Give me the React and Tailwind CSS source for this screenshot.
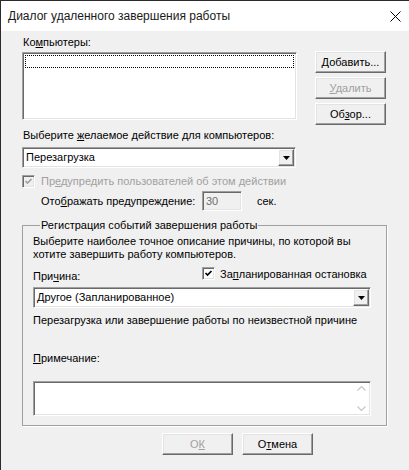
import React from 'react';

const sunken =
  'border border-t-[#a0a0a0] border-l-[#a0a0a0] border-r-white border-b-white shadow-[inset_1px_1px_0_#696969,inset_-1px_-1px_0_#e3e3e3]';
const raised =
  'border border-t-white border-l-white border-r-[#696969] border-b-[#696969] shadow-[inset_-1px_-1px_0_#a0a0a0,inset_1px_1px_0_#e3e3e3]';

function Key({ children }) {
  return <span className="underline underline-offset-[1px]">{children}</span>;
}

function Button({ children, disabled, className = '' }) {
  return (
    <div
      className={`flex h-[22px] w-[71px] items-center justify-center bg-[#f0f0f0] ${raised} ${
        disabled ? 'text-[#a0a0a0]' : 'text-black'
      } ${className}`}
    >
      {children}
    </div>
  );
}

function Arrow() {
  return (
    <svg width="7" height="4" viewBox="0 0 7 4">
      <path d="M0 0h7L3.5 4z" fill="#000" />
    </svg>
  );
}

function Combo({ value, className = '' }) {
  return (
    <div className={`flex h-[21px] items-stretch bg-white ${sunken} ${className}`}>
      <div className="flex flex-1 items-center pl-[3px]">{value}</div>
      <div className={`m-[1px] flex w-[16px] items-center justify-center bg-[#f0f0f0] ${raised}`}>
        <Arrow />
      </div>
    </div>
  );
}

function Check({ disabled }) {
  return (
    <div
      className={`flex h-[13px] w-[13px] items-center justify-center ${sunken} ${
        disabled ? 'bg-[#f0f0f0]' : 'bg-white'
      }`}
    >
      <svg width="9" height="9" viewBox="0 0 9 9">
        <path
          d="M1.5 4 L3.5 6 L7.5 2"
          fill="none"
          stroke={disabled ? '#a0a0a0' : '#000'}
          strokeWidth="1.7"
        />
      </svg>
    </div>
  );
}

export default function App() {
  return (
    <div className="flex h-[470px] w-[409px] flex-col overflow-hidden border-l border-t border-[#2b2b2b] bg-[#f0f0f0] font-['Liberation_Sans',Arial,sans-serif] text-[11px] leading-[13px] text-black">
      {/* title bar */}
      <div className="flex h-[30px] shrink-0 items-center justify-between bg-white pl-[7px] pr-[8px] text-[12px] text-[#1a1a1a]">
        <span>Диалог удаленного завершения работы</span>
        <svg width="11" height="11" viewBox="0 0 11 11">
          <path d="M0.5 0.5L10.5 10.5M10.5 0.5L0.5 10.5" stroke="#000" strokeWidth="1" />
        </svg>
      </div>

      <div className="flex flex-col pl-[21px] pr-[22px]">
        {/* computers */}
        <div className="flex">
          <div className="flex w-[275px] flex-col">
            <div className="mt-[5px] pl-[1px]">
              Ко<Key>м</Key>пьютеры:
            </div>
            <div className={`mt-[3px] h-[68px] bg-white p-[2px] ${sunken}`}>
              <div className="h-[13px] border border-dotted border-black" />
            </div>
          </div>
          <div className="ml-[18px] flex flex-col gap-[4px] pt-[20px]">
            <Button>
              <span>
                <Key>Д</Key>обавить...
              </span>
            </Button>
            <Button disabled>
              <span>
                <Key>У</Key>далить
              </span>
            </Button>
            <Button>
              <span>
                Об<Key>з</Key>ор...
              </span>
            </Button>
          </div>
        </div>

        <div className="mt-[4px] pl-[1px]">
          Выберите <Key>ж</Key>елаемое действие для компьютеров:
        </div>
        <Combo value="Перезагрузка" className="mt-[5px] w-[274px]" />

        <div className="mt-[7px] flex items-center">
          <Check disabled />
          <span className="ml-[6px] text-[#a0a0a0]">
            Пр<Key>е</Key>дупредить пользователей об этом действии
          </span>
        </div>

        <div className="mt-[3px] flex items-center pl-[19px]">
          <span className="w-[161px]">
            Ото<Key>б</Key>ражать предупреждение:
          </span>
          <div className={`flex h-[20px] w-[40px] items-center pl-[3px] text-[#6d6d6d] ${sunken}`}>30</div>
          <span className="ml-[15px]">сек.</span>
        </div>

        {/* group box */}
        <fieldset className="mt-[8px] border border-[#a0a0a0] pb-[9px] pl-[10px] pr-[15px] shadow-[1px_1px_0_white]">
          <legend className="ml-[7px] px-[1px]">Регистрация событий завершения работы</legend>
          <div className="mt-[3px]">
            Выберите наиболее точное описание причины, по которой вы
            <br />
            хотите завершить работу компьютеров.
          </div>
          <div className="mt-[6px] flex items-start">
            <span className="mt-[3px] w-[169px]">
              При<Key>ч</Key>ина:
            </span>
            <Check />
            <span className="ml-[5px] mt-[1px]">
              За<Key>п</Key>ланированная остановка
            </span>
          </div>
          <Combo value="Другое (Запланированное)" className="mt-[4px]" />
          <div className="mt-[6px]">Перезагрузка или завершение работы по неизвестной причине</div>
          <div className="mt-[25px]">
            <Key>П</Key>римечание:
          </div>
          <div className={`mt-[16px] flex h-[35px] justify-end bg-white ${sunken}`}>
            <div className="flex w-[17px] flex-col items-center justify-between py-[4px]">
              <svg width="9" height="5" viewBox="0 0 9 5">
                <path d="M0.5 4.5L4.5 0.5L8.5 4.5" fill="none" stroke="#c8c8c8" strokeWidth="1.2" />
              </svg>
              <svg width="9" height="5" viewBox="0 0 9 5">
                <path d="M0.5 0.5L4.5 4.5L8.5 0.5" fill="none" stroke="#c8c8c8" strokeWidth="1.2" />
              </svg>
            </div>
          </div>
        </fieldset>

        <div className="mt-[7px] flex gap-[9px] pl-[140px]">
          <Button disabled className="w-[70px]">
            <span>
              О<Key>К</Key>
            </span>
          </Button>
          <Button className="w-[70px]">
            <span>
              О<Key>т</Key>мена
            </span>
          </Button>
        </div>
      </div>
    </div>
  );
}
